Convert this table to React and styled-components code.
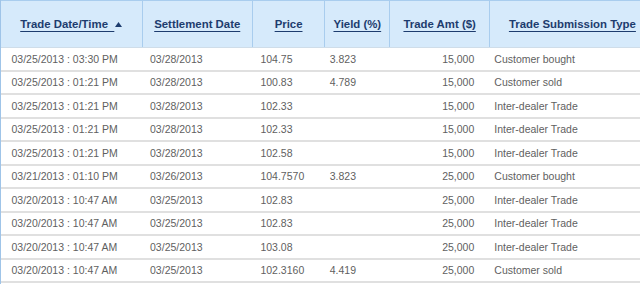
import React from "react";
import styled, { createGlobalStyle } from "styled-components";

const Global = createGlobalStyle`
  html, body { margin: 0; padding: 0; background: #fff; overflow: hidden; }
  body { font-family: "Liberation Sans", Arial, sans-serif; }
`;

const Wrap = styled.div`
  width: 640px;
  height: 284px;
  overflow: hidden;
  border-left: 1px solid #9fc4e8;
  box-sizing: border-box;
`;

const Table = styled.table`
  border-collapse: collapse;
  table-layout: fixed;
  width: 655px;
  margin-left: -1px;
`;

const Th = styled.th`
  height: 46px;
  padding: 0;
  background: #d6eafb;
  border-left: 1px solid #a9cdee;
  border-top: 1px solid #a9cdee;
  border-bottom: 1px solid #cfdde9;
  font: bold 11.4px "Liberation Sans", Arial, sans-serif;
  color: #1d3c6e;
  text-align: center;
  vertical-align: middle;
  &:first-child { border-left: 1px solid #9fc4e8; }
`;

const HeadLink = styled.span`
  text-decoration: underline;
  text-underline-offset: 3px;
  white-space: pre;
`;

const Arrow = styled.svg`
  display: inline-block;
  vertical-align: 1px;
  margin-left: 1px;
`;

const Td = styled.td`
  height: 21.5px;
  padding: 0 ${(p) => (p.$right ? "15px" : "0")} 0 ${(p) => p.$pl || 0}px;
  border-bottom: 2px solid #e0e0e0;
  font: 10.5px "Liberation Sans", Arial, sans-serif;
  color: #5f5f5f;
  text-align: ${(p) => (p.$right ? "right" : "left")};
  white-space: nowrap;
  vertical-align: middle;
`;

const rows = [
  ["03/25/2013 : 03:30 PM", "03/28/2013", "104.75", "3.823", "15,000", "Customer bought"],
  ["03/25/2013 : 01:21 PM", "03/28/2013", "100.83", "4.789", "15,000", "Customer sold"],
  ["03/25/2013 : 01:21 PM", "03/28/2013", "102.33", "", "15,000", "Inter-dealer Trade"],
  ["03/25/2013 : 01:21 PM", "03/28/2013", "102.33", "", "15,000", "Inter-dealer Trade"],
  ["03/25/2013 : 01:21 PM", "03/28/2013", "102.58", "", "15,000", "Inter-dealer Trade"],
  ["03/21/2013 : 01:10 PM", "03/26/2013", "104.7570", "3.823", "25,000", "Customer bought"],
  ["03/20/2013 : 10:47 AM", "03/25/2013", "102.83", "", "25,000", "Inter-dealer Trade"],
  ["03/20/2013 : 10:47 AM", "03/25/2013", "102.83", "", "25,000", "Inter-dealer Trade"],
  ["03/20/2013 : 10:47 AM", "03/25/2013", "103.08", "", "25,000", "Inter-dealer Trade"],
  ["03/20/2013 : 10:47 AM", "03/25/2013", "102.3160", "4.419", "25,000", "Customer sold"],
];

const cols = [
  { w: 141, pl: 11 },
  { w: 110, pl: 8 },
  { w: 72, pl: 8 },
  { w: 65, pl: 5 },
  { w: 99, right: true },
  { w: 165, pl: 5 },
];

const heads = ["Trade Date/Time  ", "Settlement Date", "Price", "Yield (%)", "Trade Amt ($)", "Trade Submission Type"];

export default function App() {
  return (
    <>
      <Global />
      <Wrap>
        <Table>
          <colgroup>
            {cols.map((c, i) => (
              <col key={i} style={{ width: c.w }} />
            ))}
          </colgroup>
          <thead>
            <tr>
              {heads.map((h, i) => (
                <Th key={i}>
                  <HeadLink>{h}</HeadLink>
                  {i === 0 && (
                    <Arrow width="7" height="5" viewBox="0 0 7 5">
                      <path d="M0 5 L3.5 0 L7 5 Z" fill="#1d3c6e" />
                    </Arrow>
                  )}
                </Th>
              ))}
            </tr>
          </thead>
          <tbody>
            {rows.map((r, ri) => (
              <tr key={ri}>
                {r.map((v, ci) => (
                  <Td key={ci} $pl={cols[ci].pl} $right={cols[ci].right}>
                    {v}
                  </Td>
                ))}
              </tr>
            ))}
          </tbody>
        </Table>
      </Wrap>
    </>
  );
}
